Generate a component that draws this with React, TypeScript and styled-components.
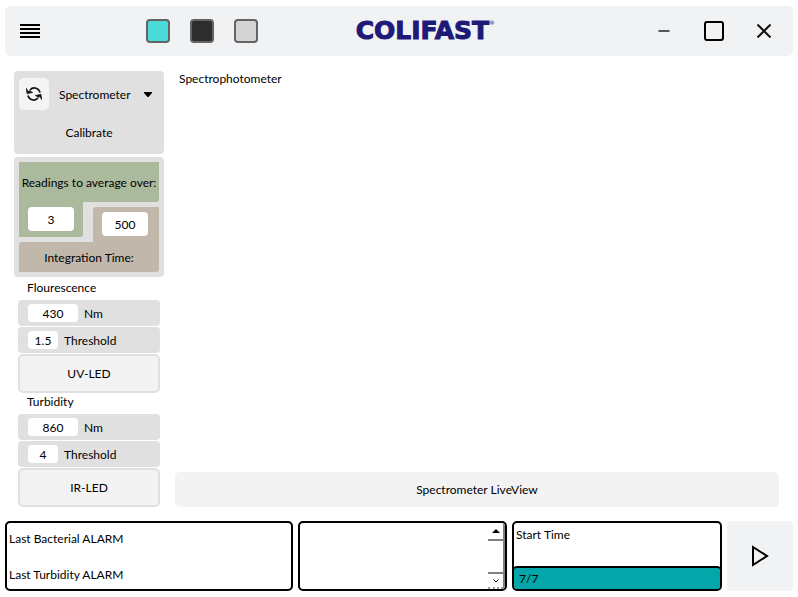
import React from "react";
import styled, { createGlobalStyle } from "styled-components";

const GlobalStyle = createGlobalStyle`
  * { box-sizing: border-box; }
  body { margin: 0; background: #fff; }
  body, button, input, select {
    font-family: Lato, "Open Sans", sans-serif;
    font-size: 12px;
    line-height: 16px;
    color: #000;
  }
  button { border: 0; padding: 0; background: none; cursor: pointer; }
  svg { display: block; }
`;

const Page = styled.div`
  min-height: 100vh;
  display: flex;
  flex-direction: column;
  padding: 6px 5px;
`;

const TitleBar = styled.header`
  height: 50px;
  display: grid;
  grid-template-columns: 332fr auto 280fr;
  align-items: center;
  padding: 0 14px;
  border-radius: 5px;
  background: #f1f2f4;
`;

const BarStart = styled.div`
  display: flex;
  align-items: center;
  gap: 105px;
`;

const Swatches = styled.div`
  display: flex;
  gap: 20px;
`;

const Swatch = styled.button<{ $color: string }>`
  width: 24px;
  height: 24px;
  border: 2px solid #626466;
  border-radius: 4px;
  background: ${(p) => p.$color};
`;

const Logo = styled.div`
  display: flex;
  align-items: flex-start;
  font-family: "DejaVu Sans", sans-serif;
  font-weight: 700;
  font-size: 25px;
  line-height: 28px;
  color: #1d1a78;
  -webkit-text-stroke: 1px #1d1a78;
`;

const Registered = styled.span`
  font-size: 6px;
  line-height: 12px;
  font-weight: 400;
  -webkit-text-stroke: 0;
`;

const WindowControls = styled.div`
  display: flex;
  justify-content: flex-end;
  gap: 20px;
`;

const IconButton = styled.button`
  width: 30px;
  height: 30px;
  display: grid;
  place-items: center;
`;

const MenuButton = styled(IconButton)`
  width: 22px;
`;

const Main = styled.main`
  flex: 1;
  display: flex;
  gap: 11px;
  padding: 15px 14px 14px 9px;
`;

const Sidebar = styled.aside`
  width: 150px;
  display: flex;
  flex-direction: column;
`;

const DevicePanel = styled.section`
  height: 83px;
  padding: 7px 5px;
  margin-bottom: 3px;
  border-radius: 4px;
  background: #e0e0e0;
`;

const DeviceRow = styled.div`
  display: flex;
  align-items: center;
  gap: 6px;
`;

const RefreshButton = styled.button`
  width: 30px;
  height: 32px;
  flex: none;
  display: grid;
  place-items: center;
  border-radius: 5px;
  background: #f4f4f4;
`;

const SelectWrap = styled.div`
  flex: 1;
  display: grid;
  grid-template-columns: 1fr 15px;
  align-items: center;
  & > * { grid-row: 1; }
  svg { grid-column: 2; pointer-events: none; }
`;

const DeviceSelect = styled.select`
  grid-column: 1 / -1;
  appearance: none;
  height: 32px;
  padding: 2px 4px 0;
  border: 0;
  background: transparent;
`;

const CalibrateButton = styled.button`
  width: 100%;
  height: 30px;
  margin-top: 8px;
`;

const SettingsPanel = styled.section`
  display: grid;
  grid-template-columns: 64px 1fr 66px;
  grid-template-rows: 40px 5px 30px 5px 30px;
  padding: 5px;
  border-radius: 4px;
  background: #e0e0e0;
`;

const SettingLabel = styled.label<{ $tan?: boolean }>`
  grid-column: 1 / -1;
  grid-row: ${(p) => (p.$tan ? 5 : 1)};
  display: flex;
  align-items: center;
  justify-content: center;
  padding-top: 2px;
  white-space: nowrap;
  border-radius: ${(p) => (p.$tan ? "3px 0 3px 0" : "0 0 3px 0")};
  background: ${(p) => (p.$tan ? "#c1b8ab" : "#abba9d")};
`;

const SettingField = styled.div<{ $tan?: boolean }>`
  grid-column: ${(p) => (p.$tan ? 3 : 1)};
  grid-row: ${(p) => (p.$tan ? "3 / 5" : "2 / 4")};
  padding: 5px 9px;
  border-radius: ${(p) => (p.$tan ? "3px 0 0 0" : "0 0 3px 0")};
  background: ${(p) => (p.$tan ? "#c1b8ab" : "#abba9d")};
`;

const Field = styled.input<{ $width: number; $tall?: boolean }>`
  display: block;
  width: ${(p) => p.$width}px;
  height: ${(p) => (p.$tall ? 24 : 18)}px;
  padding: 0;
  border: 0;
  border-radius: 4px;
  background: #fff;
  text-align: center;
`;

const Channel = styled.section`
  display: flex;
  flex-direction: column;
  gap: 1px;
  padding: 0 4px;
`;

const ChannelTitle = styled.h2`
  margin: 0;
  height: 19px;
  padding: 0 9px;
  font-size: 12px;
  line-height: 16px;
  font-weight: 400;
`;

const FirstTitle = styled(ChannelTitle)`
  height: 22px;
  padding-top: 3px;
`;

const ChannelRow = styled.label`
  height: 26px;
  display: flex;
  align-items: center;
  gap: 6px;
  padding: 0 10px;
  border-radius: 4px;
  background: #e0e0e0;
`;

const FieldUnit = styled.span`
  padding-top: 2px;
`;

const LedButton = styled.button`
  height: 39px;
  border: 2px solid #e0e0e0;
  border-radius: 5px;
  background: #f3f3f3;
`;

const Viewer = styled.section`
  flex: 1;
  display: flex;
  flex-direction: column;
  justify-content: space-between;
`;

const ViewerTitle = styled.h1`
  margin: 0;
  padding: 0 4px;
  font-size: 12px;
  line-height: 16px;
  font-weight: 400;
`;

const LiveViewButton = styled.button`
  height: 35px;
  border-radius: 5px;
  background: #f3f3f3;
`;

const Footer = styled.footer`
  height: 70px;
  display: grid;
  grid-template-columns: 288fr 209fr 210fr 66px;
  gap: 5px;
`;

const Box = styled.section`
  display: flex;
  flex-direction: column;
  justify-content: space-between;
  border: 2px solid #000;
  border-radius: 5px;
  overflow: hidden;
`;

const AlarmBox = styled(Box)`
  padding: 8px 2px 6px;
`;

const LogBox = styled(Box)`
  flex-direction: row;
  justify-content: flex-end;
`;

const ScrollRail = styled.div`
  width: 17px;
  display: flex;
  flex-direction: column;
  justify-content: space-between;
  border-right: 2px solid #808080;
`;

const ScrollButton = styled.button<{ $down?: boolean }>`
  width: 15px;
  height: ${(p) => (p.$down ? 17 : 18)}px;
  display: grid;
  place-items: center;
  border: 0 solid #808080;
  border-top-width: ${(p) => (p.$down ? 2 : 0)}px;
  border-bottom: ${(p) => (p.$down ? "2px dotted #a0a0a0" : "2px solid #808080")};
`;

const StartLabel = styled.div`
  padding: 4px 2px;
`;

const Progress = styled.div`
  height: 24px;
  margin: 0 -1px -1px;
  padding: 3px 5px;
  border: solid #000;
  border-width: 2px 1px 1px;
  border-radius: 4px;
  background: #03a7aa;
`;

const PlayButton = styled.button`
  display: grid;
  place-items: center;
  border-radius: 4px;
  background: #f1f2f4;
`;

interface ChannelProps {
  led: string;
  wavelength: string;
  threshold: string;
}

function ChannelControls({ led, wavelength, threshold }: ChannelProps) {
  return (
    <>
      <ChannelRow>
        <Field $width={50} defaultValue={wavelength} />
        <FieldUnit>Nm</FieldUnit>
      </ChannelRow>
      <ChannelRow>
        <Field $width={30} defaultValue={threshold} />
        <FieldUnit>Threshold</FieldUnit>
      </ChannelRow>
      <LedButton>{led}</LedButton>
    </>
  );
}

export default function App() {
  return (
    <>
      <GlobalStyle />
      <Page>
        <TitleBar>
          <BarStart>
            <MenuButton aria-label="Menu">
              <svg width="20" height="14" shapeRendering="crispEdges">
                <path d="M0 1h20M0 5h20M0 9h20M0 13h20" stroke="#000" strokeWidth="2" />
              </svg>
            </MenuButton>
            <Swatches>
              <Swatch $color="#4adad8" aria-label="Turquoise theme" />
              <Swatch $color="#2d2d2d" aria-label="Dark theme" />
              <Swatch $color="#d4d4d4" aria-label="Light theme" />
            </Swatches>
          </BarStart>
          <Logo>
            COLIFAST<Registered>®</Registered>
          </Logo>
          <WindowControls>
            <IconButton aria-label="Minimize">
              <svg width="12" height="2">
                <path d="M0.5 1h11" stroke="#55565a" strokeWidth="2" />
              </svg>
            </IconButton>
            <IconButton aria-label="Maximize">
              <svg width="20" height="20" fill="none" stroke="#000" strokeWidth="2">
                <rect x="1" y="1" width="18" height="18" rx="2" />
              </svg>
            </IconButton>
            <IconButton aria-label="Close">
              <svg width="14" height="14" stroke="#111" strokeWidth="2">
                <path d="M0.5 0.5L13.5 13.5M13.5 0.5L0.5 13.5" />
              </svg>
            </IconButton>
          </WindowControls>
        </TitleBar>

        <Main>
          <Sidebar>
            <DevicePanel>
              <DeviceRow>
                <RefreshButton aria-label="Refresh">
                  <svg width="16" height="14" fill="none" stroke="#111" strokeWidth="1.7">
                    <path d="M4 3C5.5 1.3 7.3.8 9 1C11.3 1.3 13.2 2.8 14 5.5M12 11C10.5 12.7 8.7 13.2 7 13C4.7 12.7 2.8 11.2 2 8.5" />
                    <path d="M0 1L1 6.8L6.8 5.6L3.6 3.6L2.4 4.4zM16 13L15 7.2L9.2 8.4L12.4 10.4L13.6 9.6z" fill="#111" strokeWidth="0.5" />
                  </svg>
                </RefreshButton>
                <SelectWrap>
                  <DeviceSelect aria-label="Device" defaultValue="Spectrometer">
                    <option>Spectrometer</option>
                  </DeviceSelect>
                  <svg width="8" height="5">
                    <path d="M0 0h8v1L4.5 5h-1L0 1z" />
                  </svg>
                </SelectWrap>
              </DeviceRow>
              <CalibrateButton>Calibrate</CalibrateButton>
            </DevicePanel>

            <SettingsPanel>
              <SettingLabel htmlFor="readings">Readings to average over:</SettingLabel>
              <SettingField>
                <Field id="readings" $width={46} $tall defaultValue="3" />
              </SettingField>
              <SettingField $tan>
                <Field id="integration" $width={46} $tall defaultValue="500" />
              </SettingField>
              <SettingLabel $tan htmlFor="integration">
                Integration Time:
              </SettingLabel>
            </SettingsPanel>

            <Channel>
              <FirstTitle>Flourescence</FirstTitle>
              <ChannelControls led="UV-LED" wavelength="430" threshold="1.5" />
              <ChannelTitle>Turbidity</ChannelTitle>
              <ChannelControls led="IR-LED" wavelength="860" threshold="4" />
            </Channel>
          </Sidebar>

          <Viewer>
            <ViewerTitle>Spectrophotometer</ViewerTitle>
            <LiveViewButton>Spectrometer LiveView</LiveViewButton>
          </Viewer>
        </Main>

        <Footer>
          <AlarmBox>
            <span>Last Bacterial ALARM</span>
            <span>Last Turbidity ALARM</span>
          </AlarmBox>
          <LogBox aria-label="Log">
            <ScrollRail>
              <ScrollButton aria-label="Scroll up">
                <svg width="8" height="4">
                  <path d="M0 4L4 0L8 4z" />
                </svg>
              </ScrollButton>
              <ScrollButton $down aria-label="Scroll down">
                <svg width="6" height="4" fill="none" stroke="#000">
                  <path d="M0.5 0.5L3 3L5.5 0.5" />
                </svg>
              </ScrollButton>
            </ScrollRail>
          </LogBox>
          <Box>
            <StartLabel>Start Time</StartLabel>
            <Progress>7/7</Progress>
          </Box>
          <PlayButton aria-label="Start">
            <svg width="18" height="22" fill="none" stroke="#000" strokeWidth="2">
              <path d="M2 2L16 11L2 20z" />
            </svg>
          </PlayButton>
        </Footer>
      </Page>
    </>
  );
}
